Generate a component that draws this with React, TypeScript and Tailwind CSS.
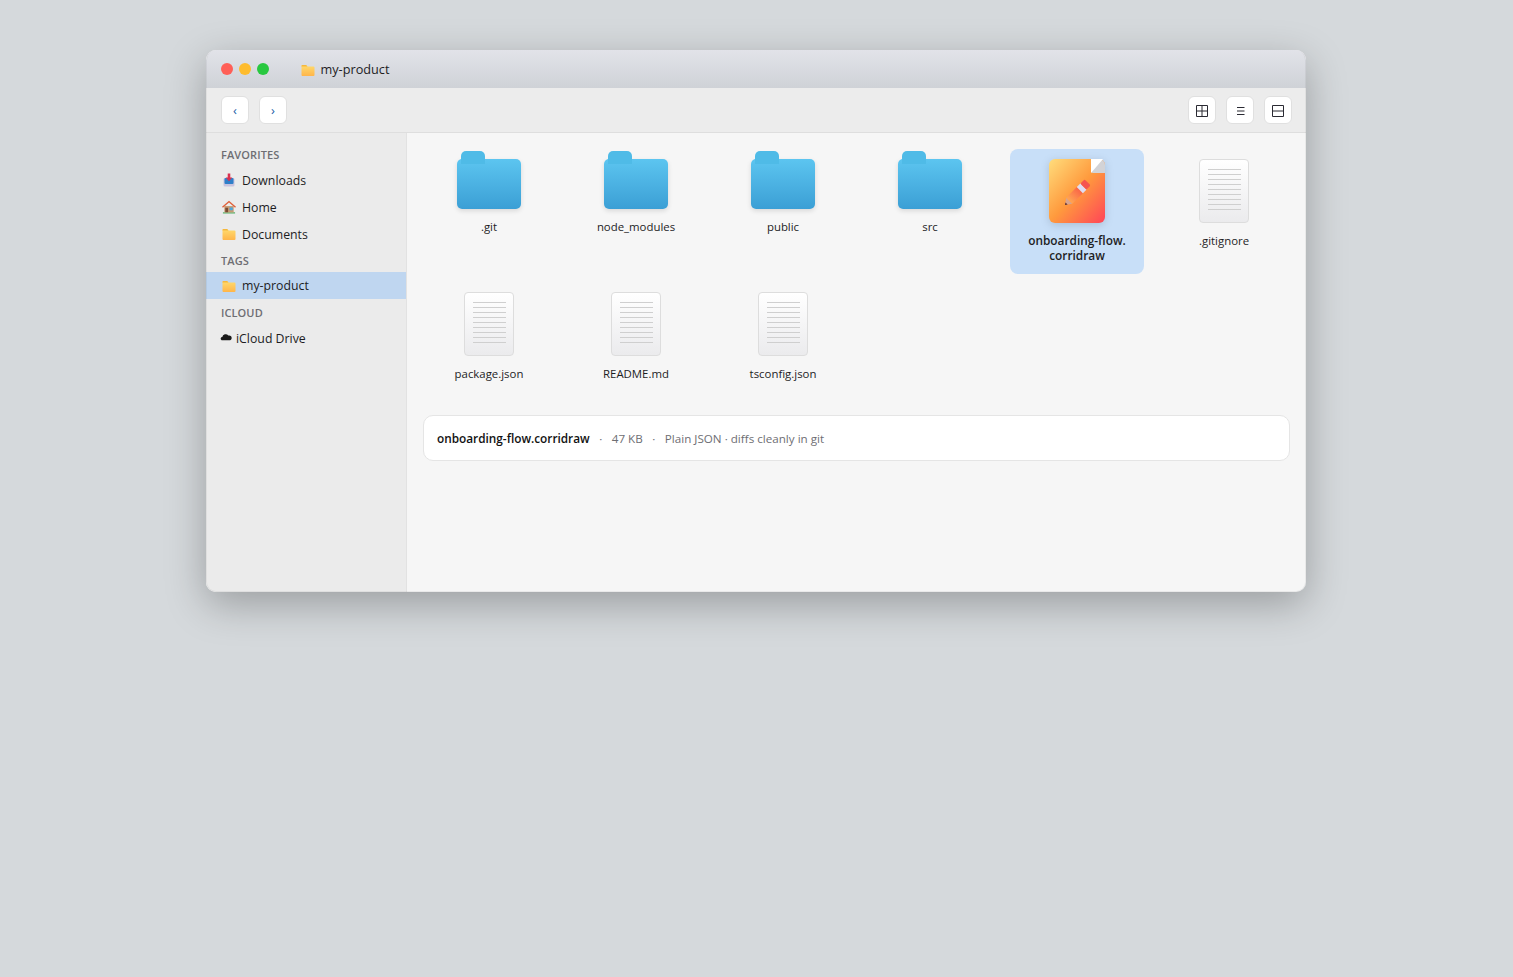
import type { ReactNode } from "react";

const font = { fontFamily: '"Open Sans", "Noto Sans", sans-serif' };

function MiniFolder({ className = "" }: { className?: string }) {
  return (
    <svg width="14" height="14" viewBox="0 0 14 14" className={className}>
      <defs>
        <linearGradient id="mini-folder" x1="0" y1="0" x2="0" y2="1">
          <stop offset="0" stopColor="#ffdc6e" />
          <stop offset="1" stopColor="#ffb54a" />
        </linearGradient>
      </defs>
      <path d="M0.5 3a1 1 0 0 1 1-1h3.600l1.400 1.400h6a1 1 0 0 1 1 1V12a1 1 0 0 1-1 1h-11a1 1 0 0 1-1-1z" fill="url(#mini-folder)" />
      <path d="M0.5 3a1 1 0 0 1 1-1h3.600l1.400 1.400h-6z" fill="#f5b73c" />
    </svg>
  );
}

function DownloadsIcon() {
  return (
    <svg width="14" height="14" viewBox="0 0 14 14">
      <rect x="1.500" y="5" width="11" height="8.500" rx="1.500" fill="#c9c3dd" />
      <rect x="2.500" y="5" width="9" height="6" rx="1" fill="#2f7fc9" />
      <path d="M5.700 0.500h2.600v4h2L7 8.200 3.700 4.500h2z" fill="#d9304f" />
    </svg>
  );
}

function HomeIcon() {
  return (
    <svg width="15" height="14" viewBox="0 0 15 14">
      <rect x="1" y="12.600" width="13" height="1.400" fill="#5cb56f" />
      <rect x="2.500" y="6" width="10" height="6.800" fill="#c79a72" />
      <path d="M7.500 0.300 15 6.800l-1 1L7.500 2.300 1 7.800l-1-1z" fill="#e0603a" />
      <rect x="3.500" y="7.800" width="3" height="4.800" fill="#7a4a33" />
      <rect x="8" y="7.500" width="3.500" height="3" fill="#4aa8e0" />
    </svg>
  );
}

function CloudIcon() {
  return (
    <svg width="12" height="8" viewBox="0 0 12 8" className="-mt-0.5">
      <path d="M1.600 7.200a1.700 1.700 0 0 1 .7-3.200A3.300 3.300 0 0 1 8.300 2.600a2.500 2.500 0 0 1 3 3.600c-.3.700-1 1-1.700 1z" fill="#1a1a1a" />
    </svg>
  );
}

function FolderIcon() {
  return (
    <div className="relative h-[50px] w-16">
      <div className="absolute inset-0 rounded-[5px] bg-gradient-to-b from-[#5cc5f0] to-[#3b9fd5] shadow-[0_2px_5px_rgba(0,0,0,0.12)]" />
      <div className="absolute -top-2 left-1 h-[13px] w-6 rounded-t-[5px] bg-[#4fbbe7]" />
    </div>
  );
}

function DocIcon() {
  return (
    <div className="flex h-16 w-[50px] flex-col items-center gap-1 rounded-[4px] border border-[#dddddd] bg-gradient-to-b from-white to-[#ebebed] pt-[9px]">
      {[0, 1, 2, 3, 4, 5, 6, 7, 8].map((i) => (
        <div key={i} className="h-px w-[33px] bg-[#cfcfcf]" />
      ))}
    </div>
  );
}

function DrawIcon() {
  return (
    <svg width="56" height="64" viewBox="0 0 56 64" className="drop-shadow-[0_2px_4px_rgba(0,0,0,0.14)]">
      <defs>
        <linearGradient id="draw-bg" x1="0" y1="0" x2="1" y2="1">
          <stop offset="0" stopColor="#ffdd7c" />
          <stop offset="0.5" stopColor="#ff9a3d" />
          <stop offset="1" stopColor="#ff4458" />
        </linearGradient>
        <linearGradient id="draw-body" x1="0" y1="0" x2="1" y2="0">
          <stop offset="0" stopColor="#ffa553" />
          <stop offset="1" stopColor="#fa6647" />
        </linearGradient>
      </defs>
      <rect width="56" height="64" rx="6" fill="url(#draw-bg)" />
      {/* dog-ear */}
      <path d="M42 0H50a6 6 0 0 1 6 6V14H44a2 2 0 0 1-2-2z" fill="#d3d3d6" />
      <path d="M42 0H54L42 14z" fill="#ffffff" />
      <g transform="translate(16 46) rotate(-45)">
        <path d="M0 0 6-4.300V4.300z" fill="#d9a48e" />
        <path d="M0 0 2.200-1.500V1.500z" fill="#5a2a2a" />
        <rect x="6" y="-4.300" width="15" height="8.600" fill="url(#draw-body)" />
        <rect x="21" y="-4.300" width="5" height="8.600" fill="#dfdcf2" />
        <rect x="26" y="-4.300" width="6" height="8.600" rx="1.500" fill="#f5544f" />
      </g>
    </svg>
  );
}

function NavButton({ children }: { children: ReactNode }) {
  return (
    <button className="flex size-7 items-center justify-center rounded-md border border-[#e0e0e0] bg-white pt-px text-[13px] text-[#1f5fa8]">
      {children}
    </button>
  );
}

function SectionLabel({ children, className = "pt-1.5 pb-1" }: { children: ReactNode; className?: string }) {
  return (
    <div className={`pl-[15px] text-[11px] leading-[14.500px] font-semibold tracking-[0.1px] text-[#6e6e73] uppercase ${className}`}>
      {children}
    </div>
  );
}

function SidebarRow({ icon, label, active }: { icon: ReactNode; label: string; active?: boolean }) {
  return (
    <div className={`flex h-[27px] items-center gap-1.5 pl-4 text-[12.300px] text-[#1d1d1f] ${active ? "bg-[#bfd6f0]" : ""}`}>
      <span className="flex w-3.5 justify-center">{icon}</span>
      <span className="pt-0.5">{label}</span>
    </div>
  );
}

type FileItem = { name: string; kind: "folder" | "doc" | "draw" };

const files: FileItem[] = [
  { name: ".git", kind: "folder" },
  { name: "node_modules", kind: "folder" },
  { name: "public", kind: "folder" },
  { name: "src", kind: "folder" },
  { name: "onboarding-flow.\ncorridraw", kind: "draw" },
  { name: ".gitignore", kind: "doc" },
  { name: "package.json", kind: "doc" },
  { name: "README.md", kind: "doc" },
  { name: "tsconfig.json", kind: "doc" },
];

function FileCell({ file }: { file: FileItem }) {
  const selected = file.kind === "draw";
  return (
    <div className={`flex flex-col items-center gap-2.5 rounded-lg px-2.5 pt-2.5 ${selected ? "bg-[#c8dff8] pb-[11px]" : "pb-2.5"}`}>
      {file.kind === "folder" && <FolderIcon />}
      {file.kind === "doc" && <DocIcon />}
      {file.kind === "draw" && <DrawIcon />}
      <div className={`text-center leading-[15px] whitespace-pre-line text-[#1d1d1f] ${selected ? "text-[11.850px] font-semibold" : "text-[11.400px]"}`}>
        {file.name}
      </div>
    </div>
  );
}

export default function App() {
  return (
    <div className="flex min-h-screen justify-center bg-[#d5d9dc] pt-[50px] pr-px" style={font}>
      <div className="relative flex h-[542px] w-[1100px] flex-col overflow-hidden rounded-[10px] bg-[#f6f6f6] shadow-[0_12px_40px_rgba(0,0,0,0.28)]">
        {/* title bar */}
        <div className="flex h-[38px] shrink-0 items-center bg-gradient-to-b from-[#e2e3e9] to-[#cfd2d7] pl-[14.500px]">
          <div className="flex gap-1.5">
            <span className="size-3 rounded-full bg-[#ff5f57]" />
            <span className="size-3 rounded-full bg-[#febc2e]" />
            <span className="size-3 rounded-full bg-[#28c840]" />
          </div>
          <div className="ml-8 flex items-center gap-1.5 text-[12.700px] font-medium text-[#1d1d1f]">
            <MiniFolder className="mt-0.5" />
            <span className="pt-0.5">my-product</span>
          </div>
        </div>

        {/* toolbar */}
        <div className="flex h-[45px] shrink-0 items-center justify-between border-b border-[#dedede] bg-[#ececec] pr-3.5 pl-[15px]">
          <div className="flex gap-2.5">
            <NavButton>‹</NavButton>
            <NavButton>›</NavButton>
          </div>
          <div className="flex gap-2.5">
            <NavButton>
              <svg width="12" height="12" viewBox="0 0 12 12" fill="none" stroke="#2a2a33">
                <path d="M.5.500h11v11H.5zM6 .500v11M.5 6h11" />
              </svg>
            </NavButton>
            <NavButton>
              <svg width="8" height="8" viewBox="0 0 8 8" fill="none" stroke="#2a2a33" className="ml-px">
                <path d="M0 .500h7.500M0 4h7.500M0 7.500h7.500" />
              </svg>
            </NavButton>
            <NavButton>
              <svg width="12" height="12" viewBox="0 0 12 12" fill="none" stroke="#2a2a33">
                <path d="M.5.500h11v11H.5zM.5 6h11" />
              </svg>
            </NavButton>
          </div>
        </div>

        <div className="flex min-h-0 flex-1">
          {/* sidebar */}
          <aside className="w-[201px] shrink-0 border-r border-[#e2e2e2] bg-[#ebebeb] pt-[9px]">
            <SectionLabel>Favorites</SectionLabel>
            <SidebarRow icon={<DownloadsIcon />} label="Downloads" />
            <SidebarRow icon={<HomeIcon />} label="Home" />
            <SidebarRow icon={<MiniFolder />} label="Documents" />
            <SectionLabel>Tags</SectionLabel>
            <SidebarRow icon={<MiniFolder />} label="my-product" active />
            <SectionLabel className="pt-[7px] pb-[3px]">iCloud</SectionLabel>
            <div className="mt-[1px] flex h-[27px] items-center gap-1 pl-3.5 text-[12.300px] text-[#1d1d1f]">
              <CloudIcon />
              <span className="pt-0.5">iCloud Drive</span>
            </div>
          </aside>

          {/* files */}
          <main className="min-w-0 flex-1 py-4 pr-4 pl-[15px]">
            <div className="grid grid-cols-[repeat(6,134px)] gap-x-[13px] gap-y-2">
              {files.map((f) => (
                <FileCell key={f.name} file={f} />
              ))}
            </div>
            <div className="mt-6 ml-px flex h-[46px] items-center gap-[9.500px] rounded-[10px] border border-[#e5e5e5] bg-white pt-px pl-[13px] text-[11.650px] text-[#6e6e73]">
              <span className="text-[11.800px] font-semibold text-[#111111]">onboarding-flow.corridraw</span>
              <span>·</span>
              <span>47 KB</span>
              <span>·</span>
              <span>Plain JSON · diffs cleanly in git</span>
            </div>
          </main>
        </div>

        {/* hairline round the window */}
        <div className="pointer-events-none absolute inset-0 rounded-[10px] border-x border-b border-black/[0.05]" />
      </div>
    </div>
  );
}
